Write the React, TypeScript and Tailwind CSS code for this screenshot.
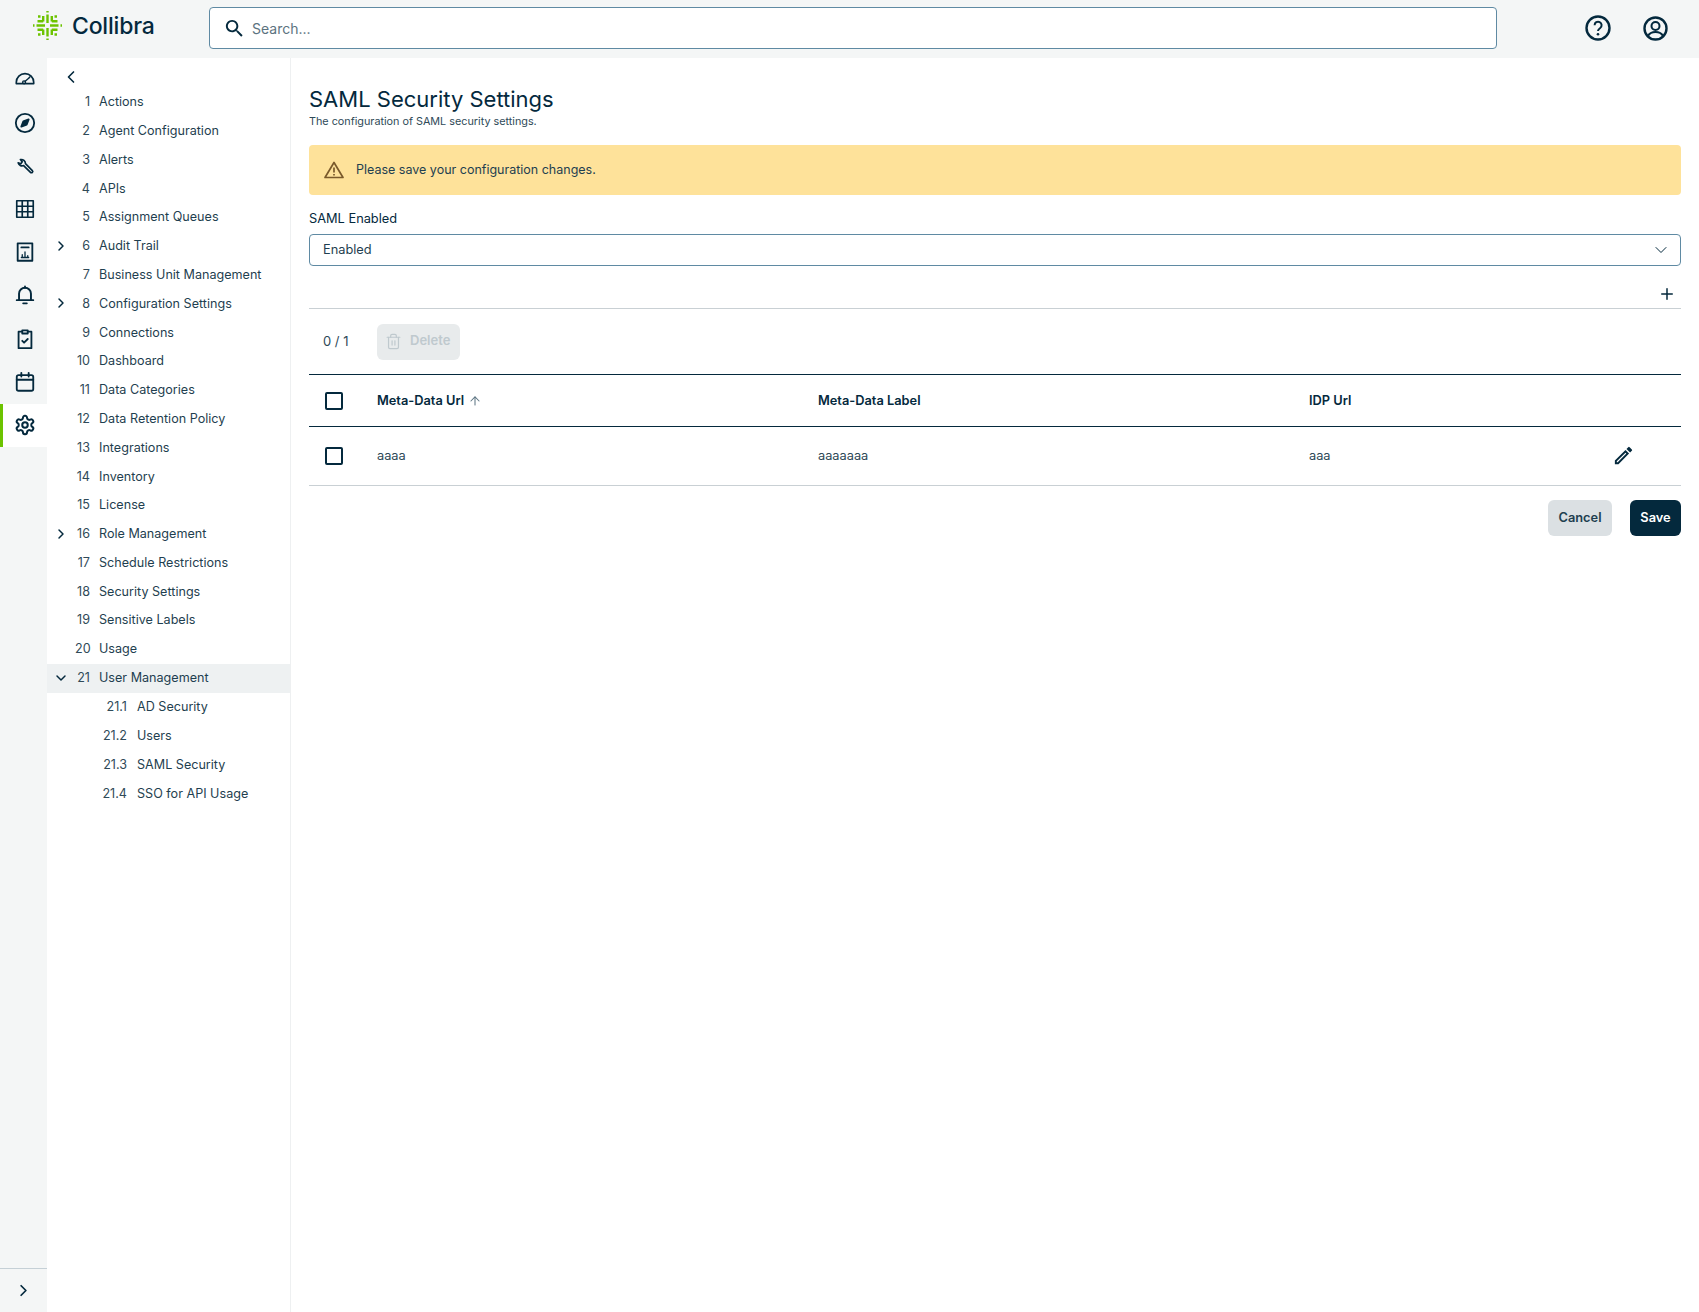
import React from "react";
import { ChevronLeft, ChevronRight, ChevronDown, ArrowUp, Plus, Trash2 } from "lucide-react";

const items: [string, string, ("r" | "d")?][] = [
  ["1", "Actions"], ["2", "Agent Configuration"], ["3", "Alerts"], ["4", "APIs"], ["5", "Assignment Queues"],
  ["6", "Audit Trail", "r"], ["7", "Business Unit Management"], ["8", "Configuration Settings", "r"], ["9", "Connections"],
  ["10", "Dashboard"], ["11", "Data Categories"], ["12", "Data Retention Policy"], ["13", "Integrations"], ["14", "Inventory"],
  ["15", "License"], ["16", "Role Management", "r"], ["17", "Schedule Restrictions"], ["18", "Security Settings"],
  ["19", "Sensitive Labels"], ["20", "Usage"], ["21", "User Management", "d"],
];
const subs = [["21.1", "AD Security"], ["21.2", "Users"], ["21.3", "SAML Security"], ["21.4", "SSO for API Usage"]];

const S = (p: { children: React.ReactNode }) => (
  <svg width="22" height="22" viewBox="0 0 24 24" fill="none" stroke="#04293d" strokeWidth="2" strokeLinecap="round" strokeLinejoin="round">{p.children}</svg>
);

const rail = [
  <S><path d="M2.5 16v-1.5a9.5 9.5 0 0 1 19 0V16z" strokeWidth="1.8" /><circle cx="11" cy="14.5" r="1.6" strokeWidth="1.5" /><path d="M12.2 13.4l3.8-3.4" strokeWidth="1.5" /><path d="M17.5 8.5l-1 1" strokeWidth="1.5" /></S>,
  <S><circle cx="12" cy="12" r="10" /><path d="M16 8l-2.2 5.8L8 16l2.2-5.8z" fill="#04293d" /></S>,
  <S><path d="M10.5 11.5L18 19a1.4 1.4 0 0 0 2-2l-7.5-7.5A4.5 4.5 0 0 0 7 5l2 2.5-1.5 2-3-1a4.5 4.5 0 0 0 6 3z" strokeWidth="1.8" /></S>,
  <S><rect x="3" y="3" width="18" height="18" strokeWidth="1.8" /><path d="M3 9h18M3 15h18M9 3v18M15 3v18" strokeWidth="1.8" /></S>,
  <S><rect x="4" y="2.5" width="16" height="19" /><path d="M8 7h8" /><path d="M9 17v-2M12 17v-5M15 17v-1M8 18h8" strokeWidth="1.4" /></S>,
  <S><path d="M5.5 16V9.5a6.5 6.5 0 0 1 13 0V16" strokeWidth="2.1" /><path d="M3 16.5h18" strokeWidth="2.1" /><path d="M10 20h4" /><path d="M12 1.5v1.5" /></S>,
  <S><path d="M9 4H5v18h14V4h-4" /><path d="M9 2.5h6V6H9z" /><path d="M9 14l2 2 4-4" /></S>,
  <S><rect x="3" y="4.5" width="18" height="17" rx="2" /><path d="M3 9.5h18M8 2v4M16 2v4" /></S>,
];

export default function App() {
  return (
    <div className="flex flex-col w-full h-[1312px] overflow-hidden bg-white text-[#04293d] font-['Inter',sans-serif]">
      <header className="flex items-center h-[58px] shrink-0 bg-[#f4f6f6]">
        <div className="flex items-center w-[209px] pl-[33px] gap-[10px] pb-[5px]">
          <svg className="mb-[3px]" width="29" height="29" viewBox="0 0 29 29" fill="none" stroke="#6cc300" strokeWidth="2.4">
            <path d="M14.5 0v1.5M14.5 3.5v8.5M14.5 17v8.5M14.5 27.5v1.5" />
            <path d="M0 14.5h1.5M3.5 14.5h8.5M17 14.5h8.5M27.5 14.5h1.5" />
            <path d="M10.2 5v5.5M18.8 5v5.5M10.2 18.5v5.5M18.8 18.5v5.5" />
            <path d="M4.5 10.2h5.7M18.8 10.2h5.7M4.5 18.8h5.7M18.8 18.8h5.7" />
            <path d="M5 5.5h2.5M21.5 5.5H24M5 23.5h2.5M21.5 23.5H24" />
          </svg>
          <span className="text-[23px] leading-none font-medium tracking-[-0.2px]">Collibra</span>
        </div>
        <div className="flex items-center w-[1288px] h-[42px] mb-[2px] bg-white border border-[#5f8aa3] rounded-[4px] pl-[13px] gap-[6px]">
          <svg width="23" height="23" viewBox="0 0 24 24" fill="#04293d"><path d="M15.5 14h-.79l-.28-.27C15.41 12.59 16 11.11 16 9.5 16 5.91 13.09 3 9.5 3S3 5.91 3 9.5 5.91 16 9.5 16c1.61 0 3.09-.59 4.23-1.57l.27.28v.79l5 4.99L20.49 19l-4.99-5zm-6 0C7.01 14 5 11.99 5 9.5S7.01 5 9.5 5 14 7.01 14 9.5 11.99 14 9.5 14z" /></svg>
          <span className="text-[14px] text-[#5c7380]">Search...</span>
        </div>
        <div className="flex items-center ml-[88px] mb-[2px] gap-[32px]">
          <svg width="26" height="26" viewBox="0 0 26 26" fill="none" stroke="#04293d" strokeWidth="2.4"><circle cx="13" cy="13" r="11.5" /><path d="M9.6 10.2a3.5 3.5 0 1 1 5.6 2.8c-1.4 1-2.2 1.6-2.2 3" strokeWidth="2" /><circle cx="13" cy="19.3" r="1.3" fill="#04293d" stroke="none" /></svg>
          <svg width="25" height="25" viewBox="0 0 25 25" fill="none" stroke="#04293d" strokeWidth="2.4"><circle cx="12.5" cy="12.5" r="11" /><circle cx="12.5" cy="10" r="4" strokeWidth="2" /><path d="M5 20c1.5-3 4-4 7.5-4s6 1 7.5 4" strokeWidth="2" /></svg>
        </div>
      </header>
      <div className="flex flex-1 min-h-0">
        <nav className="flex flex-col w-[47px] shrink-0 bg-[#f4f6f6]">
          {rail.map((ic, i) => (
            <div key={i} className="flex items-center justify-center h-[43.2px] pl-[2px]">{ic}</div>
          ))}
          <div className="flex items-center justify-center h-[43.2px] bg-white border-l-[3px] border-[#6cc300] pr-[1px]">
            <svg width="22" height="22" viewBox="0 0 24 24" fill="none" stroke="#04293d" strokeWidth="2.2" strokeLinecap="round" strokeLinejoin="round"><path d="M12.22 2h-.44a2 2 0 0 0-2 2v.18a2 2 0 0 1-1 1.73l-.43.25a2 2 0 0 1-2 0l-.15-.08a2 2 0 0 0-2.73.73l-.22.38a2 2 0 0 0 .73 2.73l.15.1a2 2 0 0 1 1 1.72v.51a2 2 0 0 1-1 1.74l-.15.09a2 2 0 0 0-.73 2.73l.22.38a2 2 0 0 0 2.73.73l.15-.08a2 2 0 0 1 2 0l.43.25a2 2 0 0 1 1 1.73V20a2 2 0 0 0 2 2h.44a2 2 0 0 0 2-2v-.18a2 2 0 0 1 1-1.73l.43-.25a2 2 0 0 1 2 0l.15.08a2 2 0 0 0 2.73-.73l.22-.39a2 2 0 0 0-.73-2.73l-.15-.08a2 2 0 0 1-1-1.74v-.5a2 2 0 0 1 1-1.74l.15-.09a2 2 0 0 0 .73-2.73l-.22-.38a2 2 0 0 0-2.73-.73l-.15.08a2 2 0 0 1-2 0l-.43-.25a2 2 0 0 1-1-1.73V4a2 2 0 0 0-2-2z" /><circle cx="12" cy="12" r="3" /></svg>
          </div>
          <div className="mt-auto flex items-center justify-center h-[44px] border-t border-[#c5d0d6]">
            <ChevronRight size={19} strokeWidth={2.2} />
          </div>
        </nav>
        <aside className="flex flex-col w-[244px] shrink-0 bg-white border-r border-[#eef0f1] text-[12.6px] pt-[8px]">
          <div className="flex items-center h-[22.2px] pl-[14px]"><ChevronLeft size={20} strokeWidth={2} /></div>
          {items.map(([n, l, c]) => (
            <div key={n} className={`flex items-center h-[28.8px] shrink-0 ${c === "d" ? "bg-[#eef1f2]" : ""}`}>
              <span className="flex justify-center w-[28px] mb-[2px]">
                {c === "r" && <ChevronRight size={16} strokeWidth={2.2} />}
                {c === "d" && <ChevronDown size={16} strokeWidth={2.2} />}
              </span>
              <span className="w-[15px] text-right text-[#2f4a58]">{n}</span>
              <span className="ml-[9px] text-[#1f3f50]">{l}</span>
            </div>
          ))}
          {subs.map(([n, l], i) => (
            <div key={n} className={`flex items-center h-[28.8px] shrink-0 ${i === 0 ? "mt-[0.3px]" : ""}`}>
              <span className="w-[80px] text-right text-[#2f4a58]">{n}</span>
              <span className="ml-[10px] text-[#1f3f50]">{l}</span>
            </div>
          ))}
        </aside>
        <main className="flex-1 min-w-0 px-[18px] pt-[28px]">
          <h1 className="text-[22px] leading-[26px] font-normal">SAML Security Settings</h1>
          <p className="text-[10.8px] leading-[14px] mt-[3px] text-[#2f4a58]">The configuration of SAML security settings.</p>
          <div className="flex items-center h-[50px] mt-[16px] pl-[15px] gap-[12px] bg-[#fee29a] rounded-[4px] text-[12.5px]">
            <svg width="20" height="18" viewBox="0 0 20 18" fill="none" stroke="#7a5a2b" strokeWidth="1.7" strokeLinejoin="round"><path d="M10 1.5L19 16.5H1z" /><path d="M10 6.5v5M10 13v1.4" /></svg>
            <span className="text-[#1f3f50]">Please save your configuration changes.</span>
          </div>
          <div className="text-[12.8px] leading-[16px] mt-[16px] text-[#04293d]">SAML Enabled</div>
          <div className="flex items-center justify-between h-[32px] mt-[7px] pl-[13px] pr-[9px] border border-[#5f8aa3] rounded-[4px] text-[12.8px]">
            <span className="text-[#1f3f50]">Enabled</span>
            <ChevronDown size={20} strokeWidth={1.2} />
          </div>
          <div className="flex items-end justify-end h-[43px] border-b border-[#c9d0d4] pr-[5px] pb-[5px]">
            <Plus size={18} strokeWidth={2} />
          </div>
          <div className="flex items-center h-[66px] border-b border-[#04293d]">
            <span className="w-[68px] pl-[14px] text-[13px] text-[#2f4a58]">0 / 1</span>
            <div className="flex items-center h-[36px] w-[83px] pl-[8px] gap-[8px] rounded-[6px] bg-[#e8ebec] text-[#bfc9ce] text-[13px] font-semibold">
              <Trash2 size={17} strokeWidth={1.7} />
              <span className="mb-[1px]">Delete</span>
            </div>
          </div>
          <div className="flex items-center h-[52px] border-b border-[#04293d] text-[12.8px] font-semibold">
            <span className="w-[68px] pl-[16px]"><Check /></span>
            <span className="flex items-center gap-[4px] w-[441px]">Meta-Data Url <ArrowUp size={14} strokeWidth={1.8} className="text-[#5f7785]" /></span>
            <span className="w-[491px]">Meta-Data Label</span>
            <span>IDP Url</span>
          </div>
          <div className="flex items-center h-[59px] border-b border-[#c9d0d4] text-[12.8px] text-[#2f4a58]">
            <span className="w-[68px] pl-[16px]"><Check /></span>
            <span className="w-[441px]">aaaa</span>
            <span className="w-[491px]">aaaaaaa</span>
            <span className="w-[303px]">aaa</span>
            <svg className="mb-[1px]" width="23" height="23" viewBox="0 0 24 24" fill="#04293d"><path d="M3 17.25V21h3.75L17.81 9.94l-3.75-3.75zM5.92 19H5v-.92l9.06-9.06.92.92zM20.71 7.04a1 1 0 0 0 0-1.41l-2.34-2.34a1 1 0 0 0-1.41 0l-1.83 1.83 3.75 3.75z" /></svg>
          </div>
          <div className="flex justify-end gap-[18px] mt-[14px] text-[12.8px] font-semibold">
            <div className="flex items-center justify-center w-[64px] h-[36px] rounded-[6px] bg-[#dbe0e3] text-[#1f3f50]">Cancel</div>
            <div className="flex items-center justify-center w-[51px] h-[36px] rounded-[6px] bg-[#04293d] text-white">Save</div>
          </div>
        </main>
      </div>
    </div>
  );
}

function Check() {
  return <span className="block w-[18px] h-[18px] border-2 border-[#04293d] rounded-[2px]" />;
}
